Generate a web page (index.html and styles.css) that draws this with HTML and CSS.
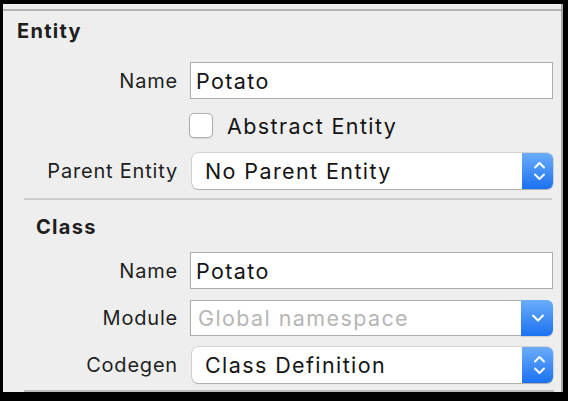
FILE: index.html
```html
<!DOCTYPE html>
<html lang="en">
<head>
<meta charset="utf-8">
<title>Entity Inspector</title>
<link rel="stylesheet" href="styles.css">
</head>
<body>
<div class="frame">
  <div class="panel">
    <div class="topline"></div>

    <section class="sec">
      <h2 class="heading heading-entity">Entity</h2>
      <div class="form">
        <div class="row">
          <span class="label">Name</span>
          <div class="field"><span class="value">Potato</span></div>
        </div>
        <div class="row">
          <span class="label"></span>
          <div class="check">
            <span class="box"></span>
            <span class="check-text">Abstract Entity</span>
          </div>
        </div>
        <div class="row">
          <span class="label">Parent Entity</span>
          <div class="popup">
            <span class="value popup-text">No Parent Entity</span>
            <span class="stepper">
              <svg width="31" height="36" viewBox="0 0 31 36"><path d="M13 14.5 L17.5 10 L22 14.5 M13 21.5 L17.5 26 L22 21.5" fill="none" stroke="#fff" stroke-width="2" stroke-linecap="round" stroke-linejoin="round"/></svg>
            </span>
          </div>
        </div>
      </div>
    </section>

    <div class="sep"></div>

    <section class="sec">
      <h2 class="heading heading-class">Class</h2>
      <div class="form form-class">
        <div class="row">
          <span class="label">Name</span>
          <div class="field"><span class="value">Potato</span></div>
        </div>
        <div class="row">
          <span class="label">Module</span>
          <div class="combo">
            <div class="combo-field"><span class="value placeholder">Global namespace</span></div>
            <span class="combo-btn">
              <svg width="32" height="36" viewBox="0 0 32 36"><path d="M12 15.5 L17 20.5 L22 15.5" fill="none" stroke="#fff" stroke-width="2" stroke-linecap="round" stroke-linejoin="round"/></svg>
            </span>
          </div>
        </div>
        <div class="row">
          <span class="label">Codegen</span>
          <div class="popup">
            <span class="value popup-text">Class Definition</span>
            <span class="stepper">
              <svg width="31" height="36" viewBox="0 0 31 36"><path d="M13 14.5 L17.5 10 L22 14.5 M13 21.5 L17.5 26 L22 21.5" fill="none" stroke="#fff" stroke-width="2" stroke-linecap="round" stroke-linejoin="round"/></svg>
            </span>
          </div>
        </div>
      </div>
    </section>

    <div class="sep sep-bottom"></div>
  </div>
</div>
</body>
</html>
```

FILE: styles.css
```css
* { box-sizing: border-box; }

html, body {
  margin: 0;
  padding: 0;
  background: #000;
}

body {
  font-family: "Inter", "Liberation Sans", sans-serif;
  color: #1c1c1c;
}

.frame {
  width: 568px;
  height: 401px;
  border-style: solid;
  border-color: #000;
  border-width: 4px 5px 9px 3px;
  background: #000;
}

.panel {
  height: 100%;
  background: #eeeeee;
  border-right: 2px solid #a8a8a8;
  display: flex;
  flex-direction: column;
}

.topline {
  margin-top: 5px;
  height: 2px;
  background: #b3b3b3;
}

.heading {
  margin: 0;
  font-size: 20px;
  font-weight: 700;
  letter-spacing: 1.3px;
  line-height: 24px;
  color: #1e1e1e;
}

.heading-entity {
  margin: 8px 0 19px 14px;
}

.heading-class {
  margin: 15px 0 13px 33px;
}

.form {
  display: flex;
  flex-direction: column;
  gap: 8px;
}

.form-class {
  gap: 10px;
}

.row {
  display: flex;
  align-items: center;
  height: 37px;
}

.label {
  width: 175px;
  margin-right: 12px;
  text-align: right;
  font-size: 20px;
  letter-spacing: 0.8px;
  color: #1f1f1f;
}

.value {
  font-size: 21.5px;
  letter-spacing: 1.4px;
  color: #141414;
  white-space: nowrap;
}

.field {
  width: 363px;
  height: 37px;
  background: #fff;
  border: 1px solid #acacac;
  display: flex;
  align-items: center;
  padding-left: 5px;
}

.check {
  display: flex;
  align-items: center;
  margin-left: -1px;
}

.box {
  width: 24px;
  height: 25px;
  background: #fff;
  border: 1px solid #aeaeae;
  border-radius: 5px;
  box-shadow: 0 0.5px 1px rgba(0, 0, 0, 0.1);
}

.check-text {
  margin-left: 14px;
  font-size: 21.5px;
  letter-spacing: 1.4px;
  color: #141414;
}

.popup {
  margin-left: 2px;
  width: 361px;
  height: 36px;
  background: #fff;
  border-radius: 6px;
  box-shadow: 0 0 0 0.5px rgba(0, 0, 0, 0.22), 0 1px 1px rgba(0, 0, 0, 0.18);
  display: flex;
  align-items: center;
  overflow: hidden;
}

.popup-text {
  flex: 1;
  padding-left: 13px;
}

.stepper,
.combo-btn {
  display: flex;
  align-self: stretch;
  background: linear-gradient(#6badfb, #1b71f1);
}

.stepper {
  width: 31px;
}

.combo {
  width: 363px;
  height: 36px;
  display: flex;
}

.combo-field {
  flex: 1;
  background: #fff;
  border: 1px solid #acacac;
  border-right: none;
  display: flex;
  align-items: center;
  padding-left: 7px;
}

.placeholder {
  color: #b6b6b6;
}

.combo-btn {
  width: 32px;
  border-radius: 0 6px 6px 0;
  box-shadow: 0 1px 1px rgba(0, 0, 0, 0.15);
}

.sep {
  margin: 9px 9px 0 21px;
  height: 2px;
  background: #cbcbcb;
}

.sep-bottom {
  margin: auto 7px 0 21px;
  background: #bababa;
}
```
